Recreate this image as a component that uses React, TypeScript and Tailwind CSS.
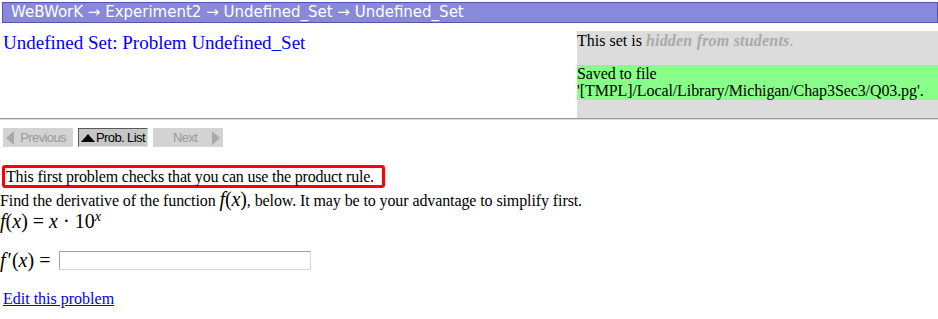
import React from "react";

function NavButton({ label, kind }: { label: string; kind: "prev" | "list" | "next" }) {
  if (kind === "list") {
    return (
      <div className="flex h-[19px] w-[70px] items-center justify-center border border-[#5a5a5a] border-r-[#e0e0e0] border-b-[#e0e0e0] bg-[#c6c6c6] text-[13px] text-black">
        <svg width="14" height="8" viewBox="0 0 14 8" className="mr-[1px]">
          <polygon points="0,8 7,0 14,8" fill="#000" />
        </svg>
        <span className="tracking-[-0.6px]">{label}</span>
      </div>
    );
  }
  return (
    <div className="flex h-[19px] w-[70px] items-center justify-between bg-[#d3d3d3] px-[3px] text-[13px] text-[#9a9a9a]">
      {kind === "prev" ? (
        <>
          <svg width="8" height="14" viewBox="0 0 8 14">
            <polygon points="8,0 0,7 8,14" fill="#a8a8a8" />
          </svg>
          <span className="mr-[4px] tracking-[-0.6px]">{label}</span>
        </>
      ) : (
        <>
          <span className="ml-[17px] tracking-[-0.6px]">{label}</span>
          <svg width="8" height="14" viewBox="0 0 8 14">
            <polygon points="0,0 8,7 0,14" fill="#a8a8a8" />
          </svg>
        </>
      )}
    </div>
  );
}

export default function App() {
  return (
    <div className="h-[319px] w-[938px] overflow-hidden bg-white font-['Liberation_Serif',serif] text-black">
      <div className="ml-[2px] mt-[2px] h-[21px] border border-[#5656a8] bg-[#8989dc] pl-[8px] font-['DejaVu_Sans',sans-serif] text-[15px] leading-[19px] text-white">
        WeBWorK → Experiment2 → Undefined_Set → Undefined_Set
      </div>

      <div className="mt-[8px] flex">
        <div className="flex-1 pl-[3px] pt-[1px] text-[19px] leading-[22px] text-[#0000ff]">
          Undefined Set: Problem Undefined_Set
        </div>
        <div className="h-[87px] w-[361px] bg-[#dcdcdc] pt-[1px] text-[16px] leading-[17px]">
          <div>
            This set is{" "}
            <span className="font-bold italic tracking-[0.2px] text-[#a9a9a9]">hidden from students</span>
            <span className="text-[#a9a9a9]">.</span>
          </div>
          <div className="mt-[16px] h-[35px] bg-[#88ff88] tracking-[-0.1px]">
            Saved to file
            <br />
            '[TMPL]/Local/Library/Michigan/Chap3Sec3/Q03.pg'.
          </div>
        </div>
      </div>

      <div className="h-[2px] border-t border-b border-t-[#9a9a9a] border-b-[#dddddd]" />

      <div className="mt-[8px] flex gap-[5px] pl-[3px] font-['Liberation_Sans_Narrow','Liberation_Sans',sans-serif]">
        <NavButton label="Previous" kind="prev" />
        <NavButton label="Prob. List" kind="list" />
        <NavButton label="Next" kind="next" />
      </div>

      <div className="mt-[18px] text-[16px] leading-[17px]">
        <div className="ml-[2px] w-[383px] rounded-[3px] border-[3px] border-[#ff0000] pl-[1px] tracking-[-0.2px]">
          This first problem checks that you can use the product rule.
        </div>
        <div className="mt-[3px] tracking-[-0.1px]">
          Find the derivative of the function{" "}
          <span className="text-[20px] italic">f</span>
          <span className="text-[20px]">(</span>
          <span className="text-[20px] italic">x</span>
          <span className="text-[20px]">)</span>, below. It may be to your advantage to simplify first.
        </div>
        <div className="text-[20px] leading-[24px]">
          <span className="italic">f</span>(<span className="italic">x</span>) = <span className="italic">x</span> · 10
          <sup className="text-[14px] italic">x</sup>
        </div>
        <div className="mt-[16px] flex items-center text-[20px] leading-[22px]">
          <span className="italic">f</span>
          <span className="ml-[2px]">′(</span>
          <span className="italic">x</span>) =
          <input
            type="text"
            className="ml-[9px] h-[19px] w-[252px] border border-[#a0a0a0] border-b-[#d6d6d6] border-r-[#d6d6d6] bg-white"
          />
        </div>
        <div className="mt-[19px] pl-[3px]">
          <a href="#" className="text-[#0000ee] underline">
            Edit this problem
          </a>
        </div>
      </div>
    </div>
  );
}
